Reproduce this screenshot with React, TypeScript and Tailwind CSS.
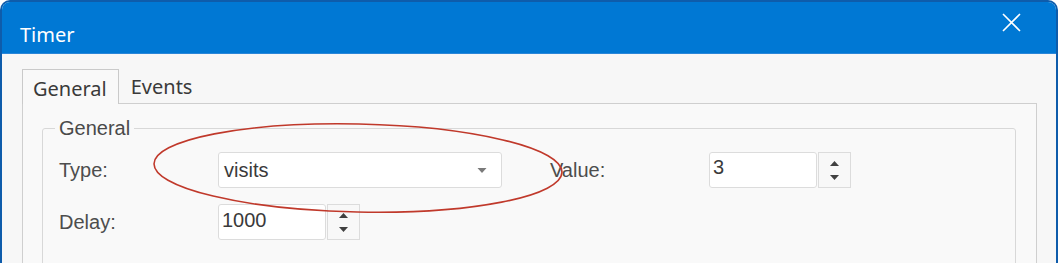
function Caret({ up, className }: { up?: boolean; className?: string }) {
  return (
    <svg width="9" height="5" viewBox="0 0 9 5" className={className}>
      {up ? <path d="M0 5 L4.5 0 L9 5 Z" fill="currentColor" /> : <path d="M0 0 L9 0 L4.5 5 Z" fill="currentColor" />}
    </svg>
  )
}

function Spin({ value, textClass }: { value: string; textClass?: string }) {
  return (
    <div className="flex gap-px">
      <div className={`w-[108px] h-[36px] rounded-[3px] border border-[#dcdcdc] bg-white pl-[3px] text-[20px] text-[#3a3a3a] ${textClass ?? ''}`}>
        {value}
      </div>
      <div className="w-[33px] h-[36px] border border-[#dcdcdc] bg-[#f8f8f8] flex flex-col items-center justify-center gap-[9px] text-[#404040]">
        <Caret up />
        <Caret />
      </div>
    </div>
  )
}

export default function App() {
  return (
    <div className="relative w-[1058px] h-[263px] overflow-hidden bg-white font-['Liberation_Sans',Arial,sans-serif]">
      <div className="h-[275px] rounded-t-[10px] border-2 border-b-0 border-[#0e5cab] bg-[#f7f7f7] overflow-hidden flex flex-col">
        {/* Title bar */}
        <div className="h-[52px] shrink-0 bg-[#0078d4] border-b border-[#2a86d8] flex justify-between">
          <div className="pl-[18px] pt-[21px] text-[20px] leading-[24px] text-white font-['Noto_Sans',sans-serif]">Timer</div>
          <svg width="19" height="19" viewBox="0 0 19 19" className="mt-[11px] mr-[35px]">
            <path d="M1 1 L18 18 M18 1 L1 18" stroke="white" strokeWidth="1.6" />
          </svg>
        </div>

        {/* Body */}
        <div className="pl-[20px] pr-[19px] pt-[15px]">
          <div className="flex h-[34px] items-end font-['Noto_Sans',sans-serif] text-[20px] text-[#3a3a3a]">
            <div className="relative z-10 -mb-px h-[35px] border border-b-0 border-[#cacaca] bg-[#f9f9f9] pl-[10px] pr-[11px] leading-[37px]">General</div>
            <div className="px-[12px] h-[34px] leading-[36px]">Events</div>
          </div>
          <div className="h-[200px] border border-[#cfcfcf] bg-[#f9f9f9] pl-[19px] pr-[20px]">
            <fieldset className="mt-[12px] h-[150px] rounded-[3px] border border-[#d8d8d8] px-[16px]">
              <legend className="-ml-[4px] px-[4px] text-[20px] leading-[24px] text-[#4a4a4a]">General</legend>
              <div className="mt-[12px] flex items-center h-[36px] text-[20px] text-[#4d4d4d]">
                <div className="w-[159px]">Type:</div>
                <div className="w-[284px] h-[36px] rounded-[3px] border border-[#dcdcdc] bg-white flex items-center justify-between pl-[5px] pr-[14px] text-[#3a3a3a]">
                  <span>visits</span>
                  <Caret className="text-[#7a7a7a] w-[10px]" />
                </div>
                <div className="ml-[48px] w-[159px]">Value:</div>
                <Spin value="3" textClass="leading-[28px]" />
              </div>
              <div className="mt-[16px] flex items-center h-[36px] text-[20px] text-[#4d4d4d]">
                <div className="w-[159px]">Delay:</div>
                <Spin value="1000" textClass="leading-[30px]" />
              </div>
            </fieldset>
          </div>
        </div>
      </div>

      {/* Annotation ellipse */}
      <svg className="pointer-events-none absolute left-0 top-0" width="1058" height="263">
        <ellipse cx="358" cy="168" rx="204" ry="44" fill="none" stroke="#c0392b" strokeWidth="1.6" transform="rotate(1.2 358 168)" />
      </svg>
    </div>
  )
}
